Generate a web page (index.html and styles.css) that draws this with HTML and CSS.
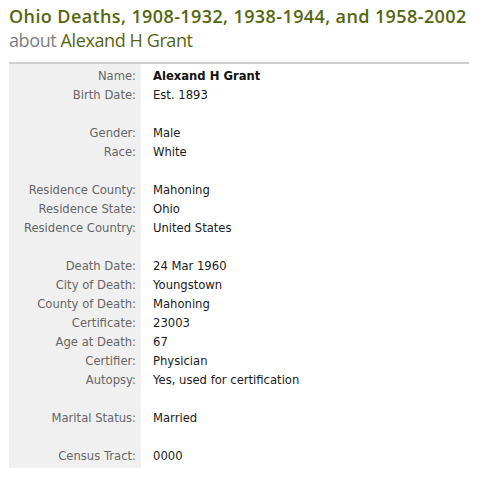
FILE: index.html
```html
<!DOCTYPE html>
<html lang="en">
<head>
  <meta charset="UTF-8">
  <title>Ohio Deaths - Alexand H Grant</title>
  <link rel="stylesheet" href="styles.css">
</head>
<body>
  <div class="page">
    <h1 class="title">Ohio Deaths, 1908-1932, 1938-1944, and 1958-2002</h1>
    <h2 class="about"><span class="muted">about</span> Alexand H Grant</h2>
    <table class="record">
      <tr class="pad-top"><th></th><td></td></tr>
      <tr><th>Name:</th><td><b>Alexand H Grant</b></td></tr>
      <tr><th>Birth Date:</th><td>Est. 1893</td></tr>
      <tr class="gap"><th></th><td></td></tr>
      <tr><th>Gender:</th><td>Male</td></tr>
      <tr><th>Race:</th><td>White</td></tr>
      <tr class="gap"><th></th><td></td></tr>
      <tr><th>Residence County:</th><td>Mahoning</td></tr>
      <tr><th>Residence State:</th><td>Ohio</td></tr>
      <tr><th>Residence Country:</th><td>United States</td></tr>
      <tr class="gap"><th></th><td></td></tr>
      <tr><th>Death Date:</th><td>24 Mar 1960</td></tr>
      <tr><th>City of Death:</th><td>Youngstown</td></tr>
      <tr><th>County of Death:</th><td>Mahoning</td></tr>
      <tr><th>Certificate:</th><td>23003</td></tr>
      <tr><th>Age at Death:</th><td>67</td></tr>
      <tr><th>Certifier:</th><td>Physician</td></tr>
      <tr><th>Autopsy:</th><td>Yes, used for certification</td></tr>
      <tr class="gap"><th></th><td></td></tr>
      <tr><th>Marital Status:</th><td>Married</td></tr>
      <tr class="gap"><th></th><td></td></tr>
      <tr><th>Census Tract:</th><td>0000</td></tr>
      <tr class="pad-bottom"><th></th><td></td></tr>
    </table>
  </div>
</body>
</html>
```

FILE: styles.css
```css
body {
  margin: 0;
  background: #fff;
}
.page {
  padding: 4px 12px 0 9px;
}
.title {
  margin: 0;
  font: 600 18px/24px "Open Sans", "DejaVu Sans", sans-serif;
  letter-spacing: 0.4px;
  color: #56660f;
}
.about {
  margin: 0;
  font: normal 18px/24px "Open Sans", "DejaVu Sans", sans-serif;
  letter-spacing: -0.4px;
  color: #56660f;
}
.about .muted {
  color: #7d7d7d;
}
.record {
  margin-top: 10px;
  width: 460px;
  border-collapse: collapse;
  border-top: 2px solid #cfcfcf;
  font: 11.6px "DejaVu Sans", Verdana, sans-serif;
}
.record tr {
  height: 19px;
}
.record tr.pad-top {
  height: 3px;
}
.record tr.pad-bottom {
  height: 3px;
}
.record th {
  width: 127px;
  padding: 0 5px 0 0;
  background: #f0f0f0;
  color: #666;
  font-weight: normal;
  text-align: right;
  white-space: nowrap;
}
.record td {
  padding: 0 0 0 12px;
  color: #1a1a1a;
}
.record b {
  color: #111;
}
```
